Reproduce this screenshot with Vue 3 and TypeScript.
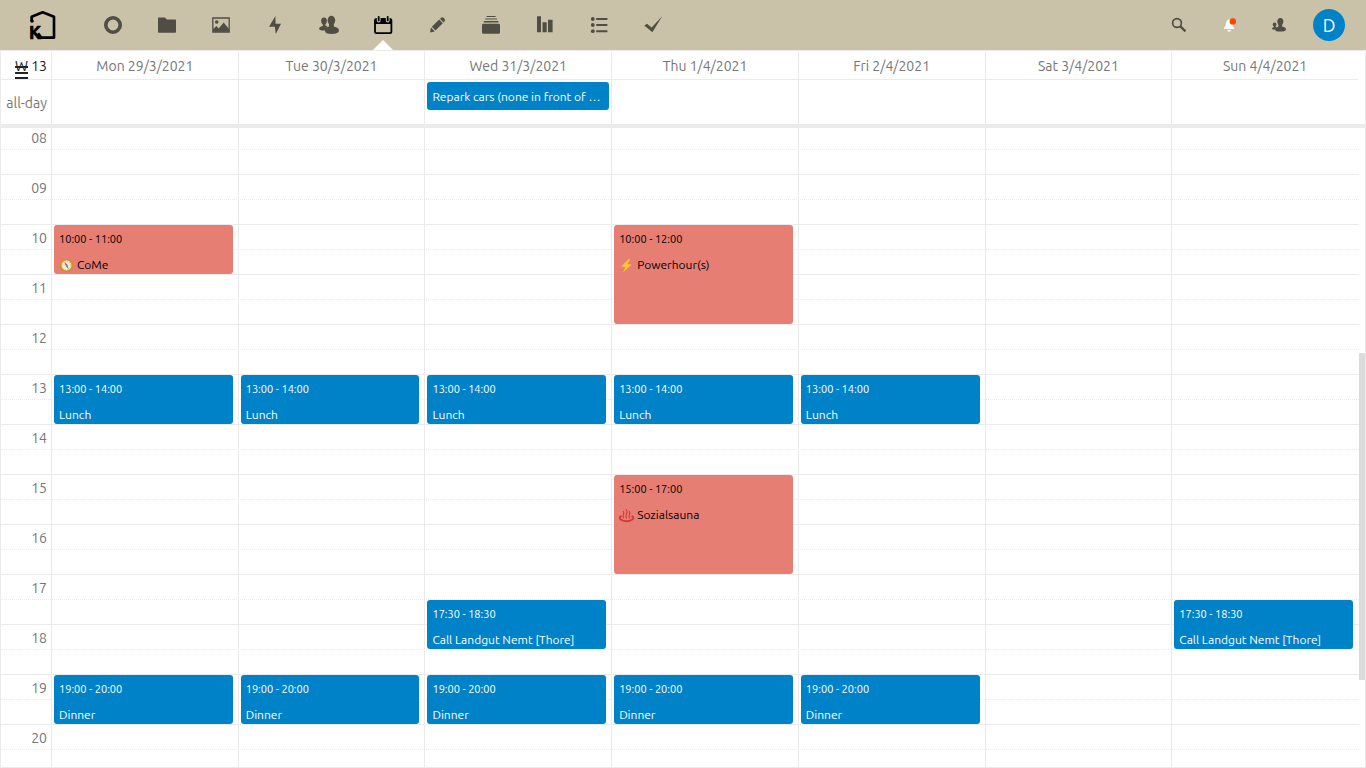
<script setup lang="ts">
interface CalendarEvent {
  title: string
  from: string
  to: string
  tone: 'blue' | 'red'
  icon?: 'compass' | 'bolt' | 'steam'
}

interface Day {
  label: string
  allDay?: string
  events: CalendarEvent[]
}

const FIRST_HOUR = 8
const hours: string[] = Array.from({ length: 13 }, (_, i) => String(FIRST_HOUR + i).padStart(2, '0'))

const lunch: CalendarEvent = { title: 'Lunch', from: '13:00', to: '14:00', tone: 'blue' }
const dinner: CalendarEvent = { title: 'Dinner', from: '19:00', to: '20:00', tone: 'blue' }
const call: CalendarEvent = { title: 'Call Landgut Nemt [Thore]', from: '17:30', to: '18:30', tone: 'blue' }

const days: Day[] = [
  { label: 'Mon 29/3/2021', events: [{ title: 'CoMe', from: '10:00', to: '11:00', tone: 'red', icon: 'compass' }, lunch, dinner] },
  { label: 'Tue 30/3/2021', events: [lunch, dinner] },
  { label: 'Wed 31/3/2021', allDay: 'Repark cars (none in front of …', events: [lunch, call, dinner] },
  {
    label: 'Thu 1/4/2021',
    events: [
      { title: 'Powerhour(s)', from: '10:00', to: '12:00', tone: 'red', icon: 'bolt' },
      lunch,
      { title: 'Sozialsauna', from: '15:00', to: '17:00', tone: 'red', icon: 'steam' },
      dinner,
    ],
  },
  { label: 'Fri 2/4/2021', events: [lunch, dinner] },
  { label: 'Sat 3/4/2021', events: [] },
  { label: 'Sun 4/4/2021', events: [call] },
]

const apps: string[] = ['Dashboard', 'Files', 'Photos', 'Activity', 'Contacts', 'Calendar', 'Notes', 'Deck', 'Polls', 'Lists', 'Tasks']
const active = 'Calendar'

/* Grid line of a time of day, counted in half hours */
function line(time: string): number {
  const [h, m] = time.split(':').map(Number)
  return (h - FIRST_HOUR) * 2 + m / 30 + 1
}
</script>

<template>
  <div class="page">
    <header class="topbar">
      <a class="logo" href="#" aria-label="Home">
        <svg viewBox="0 0 78 90" width="26" height="30">
          <path d="M5 33V20L38 7L72 20V83H34L24 70" fill="none" stroke="#000" stroke-width="8" stroke-linejoin="round" />
          <circle cx="6" cy="33" r="5.5" />
          <text x="-3" y="86" class="logo-letter">K</text>
        </svg>
      </a>
      <nav class="apps">
        <a v-for="app in apps" :key="app" href="#" class="app" :class="{ active: app === active }" :aria-label="app">
          <svg viewBox="0 0 20 20" width="20" height="20" fill="currentColor">
            <circle v-if="app === 'Dashboard'" cx="10" cy="10" r="7.2" fill="none" stroke="currentColor" stroke-width="3.6" />
            <path v-else-if="app === 'Files'" d="M1.6 2.4H8l1.8 2H18.4q.6 0 .6.6V17q0 .7-.7.7H1.7Q1 17.7 1 17V3q0-.6.6-.6z" />
            <template v-else-if="app === 'Photos'">
              <path d="M1.8 3H18.2V17H1.8z" fill="none" stroke="currentColor" stroke-width="1.3" />
              <circle cx="5.7" cy="7" r="1.8" />
              <path d="M2 16.8V14.2L5.4 11l2.3 2.4 5-5.8L18 14v2.8z" />
            </template>
            <path v-else-if="app === 'Activity'" d="M10.4 1L4 11.7h5.8L10.8 19 16 8.8h-5.4z" />
            <template v-else-if="app === 'Contacts'">
              <ellipse cx="5" cy="6" rx="2.8" ry="3.4" />
              <path d="M3.8 8h2.6v2.6l2 1L6.4 15.4H2.6Q0 15.2 0 13.8 0 12 3.8 11z" />
              <ellipse cx="12.4" cy="5.4" rx="3.8" ry="4.6" />
              <path d="M10 8.6h4.8v3q5.2 1 5.2 4 0 3.4-7.3 3.4-6.7 0-6.7-3 0-3.2 4-4.6z" />
            </template>
            <template v-else-if="app === 'Calendar'">
              <rect x="2" y="4" width="16.4" height="14.2" rx="1.6" fill="none" stroke="currentColor" stroke-width="1.8" />
              <path d="M1.6 4.4H18.8V9H1.6z" />
              <path d="M5.7 2.4V5.6M14.7 2.4V5.6" class="ring-gap" />
              <path d="M5.7 1.8V5.4M14.7 1.8V5.4" stroke="currentColor" stroke-width="1.8" stroke-linecap="round" />
            </template>
            <template v-else-if="app === 'Notes'">
              <path d="M3 17.4L4 12.6 7.8 16.4z" />
              <path d="M4.8 11.8L12.2 4.6 15.8 8.2 8.5 15.5z" />
              <path d="M13 3.8L14.4 2.6Q15.4 1.8 16.5 2.8L17.6 4Q18.6 5 17.7 6.1L16.6 7.4z" />
            </template>
            <template v-else-if="app === 'Deck'">
              <path d="M5.6 1H14.6V2H5.6zM4.2 3.4H16V4.6H4.2zM2.8 6H17.4V7.4H2.8z" />
              <rect x="1" y="8.8" width="18" height="10" rx="1.4" />
            </template>
            <path v-else-if="app === 'Polls'" d="M2 1.2H6V17.2H2zM7.5 7.2H11.7V17.2H7.5zM13 4.8H17.6V17.2H13z" />
            <template v-else-if="app === 'Lists'">
              <circle cx="3.8" cy="4" r="1.9" /><circle cx="3.8" cy="10" r="1.9" /><circle cx="3.8" cy="16.2" r="1.9" />
              <path d="M7.2 3H18.4V5H7.2zM7.2 9H18.4V11H7.2zM7.2 15.2H18.4V17.2H7.2z" />
            </template>
            <path v-else d="M1.3 10.6L4 8.8 8.6 12.4 19.2 1.2 9.4 17.2z" />
          </svg>
        </a>
      </nav>
      <div class="tools">
        <button class="tool" type="button" aria-label="Search">
          <svg viewBox="0 0 16 16" width="16" height="16" fill="none" stroke="currentColor">
            <circle cx="6" cy="6" r="4.4" stroke-width="1.7" />
            <path d="M9.4 9.4L14.4 14.4" stroke-width="2.2" />
          </svg>
        </button>
        <button class="tool" type="button" aria-label="Notifications">
          <svg viewBox="0 0 16 16" width="16" height="16">
            <path d="M7.8 2.2Q4.2 3 4 6.6 3.9 9.4 2 11v.9H12V11Q10.3 9.4 10.2 6.6L8 4zM5.2 13h3.9q-.4 1.8-2 1.8T5.2 13z" fill="#fff" transform="translate(1 0)" />
            <circle cx="11.8" cy="4.4" r="3.2" fill="#ff4402" />
          </svg>
        </button>
        <button class="tool" type="button" aria-label="Contacts menu">
          <svg viewBox="0 0 16 16" width="16" height="16" fill="currentColor">
            <circle cx="3.6" cy="7.4" r="1.9" />
            <path d="M2.8 8.8h1.8v1l1 .8-1.4 2.2Q1 12.8 1 11.8q0-1.4 1.8-1.9z" />
            <ellipse cx="9.3" cy="4.6" rx="3" ry="3.6" />
            <path d="M7.4 7h3.7v2.4Q15 10.2 15 12.2q0 2.4-5.5 2.4T4.2 12.4Q4.2 10.4 7.4 9.4z" />
          </svg>
        </button>
        <button class="tool" type="button" aria-label="Account"><span class="avatar">D</span></button>
      </div>
    </header>

    <main class="calendar">
      <div class="columns head">
        <div class="axis week"><span class="week-mark">W</span> 13</div>
        <div v-for="day in days" :key="day.label" class="cell day-name">{{ day.label }}</div>
      </div>
      <div class="columns all-day">
        <div class="axis all-day-label">all-day</div>
        <div v-for="day in days" :key="day.label" class="cell">
          <a v-if="day.allDay" href="#" class="event blue banner">{{ day.allDay }}</a>
        </div>
      </div>
      <div class="divider"></div>
      <div class="scroller">
        <div class="lines">
          <div v-for="hour in hours" :key="hour" class="hour"></div>
        </div>
        <div class="columns body">
          <div class="axis times">
            <div v-for="hour in hours" :key="hour" class="time">{{ hour }}</div>
          </div>
          <div v-for="day in days" :key="day.label" class="cell day">
            <a
              v-for="event in day.events"
              :key="event.from"
              href="#"
              class="event timed"
              :class="event.tone"
              :style="{ gridRow: `${line(event.from)} / ${line(event.to)}` }"
            >
              <span class="event-time">{{ event.from }} - {{ event.to }}</span>
              <span class="event-title">
                <svg v-if="event.icon" class="emoji" viewBox="0 0 15 15" width="15" height="15">
                  <template v-if="event.icon === 'compass'">
                    <circle cx="7.5" cy="7.5" r="5.8" fill="#f1ecd9" stroke="#d3911d" stroke-width="1.7" />
                    <circle cx="7.5" cy="7.5" r="4.2" fill="none" stroke="#b9ae8d" stroke-width=".7" stroke-dasharray="1 1.2" />
                    <path d="M5.2 3.6L8.6 7 7 8.2z" fill="#d9433d" />
                    <path d="M9.8 11.6L8.6 7 7 8.2z" fill="#4b8fae" />
                  </template>
                  <path v-else-if="event.icon === 'bolt'" d="M9.8 1L2.2 8.6l4.2.3L4 14.2 12.8 6.6 8.4 6.3 11.2 1z" fill="#fdc72e" />
                  <g v-else fill="none" stroke="#d8353c" stroke-linecap="round">
                    <path d="M1.8 8.4Q-.2 9.6 1.6 11.4 3.4 13.2 7.5 13.2T13.4 11.4Q15.2 9.6 13.2 8.4" stroke-width="1.9" />
                    <path d="M4.6 9.8Q3.4 8.2 4.4 6.6T4.2 3.4M7.5 10Q6.4 8 7.5 6T7.3 1.6M10.4 9.8Q9.4 8.2 10.4 6.6T10.2 3.4" stroke-width="1.1" />
                  </g>
                </svg>
                {{ event.title }}
              </span>
            </a>
          </div>
        </div>
        <div class="scrollbar"></div>
      </div>
    </main>
  </div>
</template>

<style>
body {
  margin: 0;
}
</style>

<style scoped>
.page {
  --line: #ebebeb;
  display: flex;
  flex-direction: column;
  height: 100vh;
  overflow: hidden;
  background: #fff;
  color: #767676;
  font-family: Ubuntu, "Noto Sans", "Open Sans", sans-serif;
  font-size: 14px;
}
.page *,
.page *::before,
.page *::after {
  box-sizing: border-box;
}
a {
  color: inherit;
  text-decoration: none;
}
svg {
  display: block;
}

.topbar {
  display: flex;
  flex: none;
  height: 50px;
  background: #c9c2a9;
  color: #504e44;
}
.logo {
  display: flex;
  align-items: center;
  justify-content: center;
  width: 86px;
}
.logo svg {
  overflow: visible;
}
.logo-letter {
  font-size: 54px;
  font-weight: 700;
  stroke: #000;
  stroke-width: 2px;
}
.apps {
  display: flex;
}
.app {
  position: relative;
  display: flex;
  align-items: center;
  justify-content: center;
  width: 54px;
}
.app.active {
  color: #000;
}
.app.active::after {
  content: "";
  position: absolute;
  bottom: 0;
  left: 50%;
  margin-left: -10px;
  border: 10px solid transparent;
  border-top: 0;
  border-bottom-color: #fff;
}
.ring-gap {
  stroke: #c9c2a9;
  stroke-width: 3.8;
  stroke-linecap: round;
}
.tools {
  display: flex;
  margin-left: auto;
  padding-right: 12px;
}
.tool {
  display: flex;
  align-items: center;
  justify-content: center;
  width: 50px;
  padding: 0;
  border: 0;
  background: none;
  color: inherit;
  font: inherit;
}
.avatar {
  width: 32px;
  height: 32px;
  border-radius: 50%;
  background: #0082c9;
  color: #fff;
  font-size: 18px;
  line-height: 32px;
}

.calendar {
  display: flex;
  flex: 1;
  flex-direction: column;
  min-height: 0;
  border: 1px solid var(--line);
}
.columns {
  display: grid;
  grid-template-columns: 50px repeat(7, minmax(0, 1fr));
  padding-right: 7px;
}
.cell {
  border-left: 1px solid var(--line);
}
.head {
  line-height: 30px;
}
.head > * {
  height: 29px;
  border-bottom: 1px solid var(--line);
}
.day-name {
  text-align: center;
}
.axis {
  padding-right: 4px;
  text-align: right;
}
.week {
  color: #222;
}
.week-mark {
  display: inline-block;
  height: 28px;
  border-bottom: 2px solid #222;
  line-height: 30px;
  text-decoration: underline line-through 2px;
}
.all-day {
  height: 44px;
}
.all-day-label {
  line-height: 46px;
}
.divider {
  position: relative;
  z-index: 1;
  flex: none;
  height: 4px;
  margin-bottom: -4px;
  background: var(--line);
}

.scroller {
  position: relative;
  flex: 1;
  min-height: 0;
  overflow: hidden;
}
.lines {
  position: absolute;
  inset: 0 6px auto 0;
}
.hour {
  height: 50px;
  border-top: 1px solid var(--line);
}
.hour::after {
  content: "";
  display: block;
  margin-top: 24px;
  border-top: 1px dotted var(--line);
}
.body {
  position: relative;
}
.time {
  height: 50px;
  line-height: 28px;
}
.day {
  display: grid;
  grid-template-rows: repeat(26, 25px);
}
.event {
  display: block;
  border-radius: 3px;
  overflow: hidden;
  font-size: 12px;
  white-space: nowrap;
}
.blue {
  background: #0082c9;
  color: #fff;
}
.red {
  background: #e67e74;
  color: #000;
}
.banner {
  height: 28px;
  margin: 2px 2px 0;
  padding: 0 5px;
  line-height: 30px;
}
.timed {
  margin: 1px 5px 0 2px;
  padding: 2px 5px 0;
}
.event-time {
  display: block;
  font-size: 11px;
  line-height: 24px;
}
.event-title {
  display: flex;
  gap: 3px;
  align-items: center;
  line-height: 28px;
}
.scrollbar {
  position: absolute;
  top: 229px;
  right: 0;
  width: 6px;
  height: 327px;
  background: #dbdbdb;
}
</style>
